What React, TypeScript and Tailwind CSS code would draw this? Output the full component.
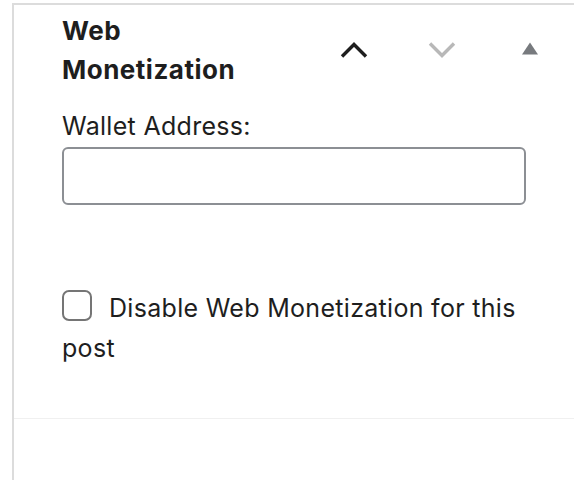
import React from "react";

export default function App() {
  return (
    <div className="h-[480px] w-[574px] bg-white pl-[12px] pt-[3px] text-[#1e1e1e]" style={{ fontFamily: "Inter, 'Noto Sans', sans-serif" }}>
      <div className="h-full border-l-2 border-[#dcdcdc]">
        <div className="border-t-2 border-[#dcdcdc] border-b border-b-[#f0f0f0] pl-[48px] pt-[6px] pb-[50px]">
          <div className="flex items-start">
            <h2 className="w-[200px] text-[26px] font-bold leading-[39px] tracking-[0.5px]">Web Monetization</h2>
            <div className="ml-auto flex pt-[31px]">
              <div className="flex w-[88px] justify-center">
                <svg width="28" height="16" viewBox="0 0 28 16">
                  <path d="M2 14.5 L14 2.5 L26 14.5" fill="none" stroke="#1e1e1e" strokeWidth="3.4" />
                </svg>
              </div>
              <div className="flex w-[88px] justify-center">
                <svg width="28" height="16" viewBox="0 0 28 16">
                  <path d="M2 1.5 L14 13.5 L26 1.5" fill="none" stroke="#b8b8b8" strokeWidth="3.4" />
                </svg>
              </div>
              <div className="flex w-[88px] justify-center">
                <svg width="16" height="13" viewBox="0 0 16 13">
                  <path d="M0 12.5 L8 0.5 L16 12.5 Z" fill="#777a7e" />
                </svg>
              </div>
            </div>
          </div>
          <label className="mt-[21px] block text-[25px] leading-[32px] tracking-[0.3px]">Wallet Address:</label>
          <input type="text" className="mt-[5px] block h-[58px] w-[464px] rounded-[6px] border-2 border-[#8c8f94] bg-white px-3 text-[24px] outline-none" />
          <p className="mt-[83px] w-[464px] text-[25px] leading-[40px] tracking-[0.3px]">
            <span className="mr-[17px] inline-block h-[31px] w-[30px] rounded-[7px] border-2 border-[#757575] bg-white align-[-4px]" />
            Disable Web Monetization for this post
          </p>
        </div>
      </div>
    </div>
  );
}
